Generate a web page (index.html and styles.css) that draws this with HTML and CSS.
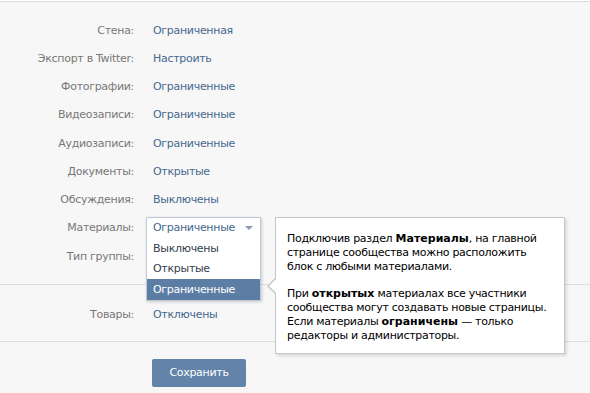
FILE: index.html
```html
<!DOCTYPE html>
<html lang="ru">
<head>
<meta charset="utf-8">
<title>Настройки</title>
<link rel="stylesheet" href="styles.css">
</head>
<body>
<div class="page">
  <div class="section first">
    <div class="row"><div class="label">Стена:</div><div class="value">Ограниченная</div></div>
    <div class="row"><div class="label">Экспорт в Twitter:</div><div class="value">Настроить</div></div>
    <div class="row"><div class="label">Фотографии:</div><div class="value">Ограниченные</div></div>
    <div class="row"><div class="label">Видеозаписи:</div><div class="value">Ограниченные</div></div>
    <div class="row"><div class="label">Аудиозаписи:</div><div class="value">Ограниченные</div></div>
    <div class="row"><div class="label">Документы:</div><div class="value">Открытые</div></div>
    <div class="row"><div class="label">Обсуждения:</div><div class="value">Выключены</div></div>
    <div class="row"><div class="label">Материалы:</div>
      <div class="value anchor">
        <div class="dropdown">
          <div class="dd-head"><span>Ограниченные</span><span class="dd-arrow"></span></div>
          <div class="dd-item">Выключены</div>
          <div class="dd-item">Открытые</div>
          <div class="dd-item selected">Ограниченные</div>
        </div>
        <div class="tip">
          <p>Подключив раздел <b>Материалы</b>, на главной странице сообщества можно расположить блок с любыми материалами.</p>
          <p>При <b>открытых</b> материалах все участники сообщества могут создавать новые страницы. Если материалы <b>ограничены</b> — только редакторы и администраторы.</p>
        </div>
      </div>
    </div>
    <div class="row"><div class="label">Тип группы:</div><div class="value"></div></div>
  </div>
  <div class="section second">
    <div class="row"><div class="label">Товары:</div><div class="value">Отключены</div></div>
  </div>
  <div class="actions">
    <button class="btn">Сохранить</button>
  </div>
</div>
</body>
</html>
```
FILE: styles.css
```css
html, body {
  margin: 0;
  padding: 0;
  background: #f7f7f7;
}
body {
  font-family: "DejaVu Sans", "Liberation Sans", sans-serif;
  font-size: 11px;
  letter-spacing: -0.3px;
  border-top: 1px solid #ffffff;
}
.page {
  border-top: 1px solid #dcdcdc;
  height: 391px;
  overflow: hidden;
}
.section {
  border-bottom: 1px solid #dedede;
}
.section.first {
  padding: 14px 0 14px;
}
.section.second {
  padding: 15px 0 12px;
}
.row {
  display: flex;
  align-items: center;
  height: 28.25px;
}
.label {
  width: 134px;
  text-align: right;
  color: #777777;
  flex: none;
}
.value {
  margin-left: 19px;
  color: #45688e;
  white-space: nowrap;
}
.anchor {
  position: relative;
  align-self: stretch;
}
.dropdown {
  position: absolute;
  left: -7px;
  top: 3px;
  width: 113px;
  background: #ffffff;
  border: 1px solid #bfc9d4;
  box-shadow: 1px 1px 3px rgba(0, 0, 0, 0.18);
  z-index: 2;
}
.dd-head, .dd-item {
  height: 20px;
  line-height: 20px;
  padding-left: 6px;
  color: #45688e;
}
.dd-head {
  display: flex;
  align-items: center;
  justify-content: space-between;
  padding-right: 7px;
  height: 21px;
}
.dd-item {
  color: #34404e;
}
.dd-arrow {
  width: 0;
  height: 0;
  border-left: 4px solid transparent;
  border-right: 4px solid transparent;
  border-top: 4px solid #8c9aab;
}
.dd-item.selected {
  background: #5c7ea5;
  color: #ffffff;
  height: 21px;
  line-height: 21px;
}
.tip {
  position: absolute;
  left: 122px;
  top: 3px;
  width: 264px;
  padding: 14px 13px 10px 11px;
  background: #ffffff;
  border: 1px solid #c3c7cc;
  box-shadow: 2px 2px 3px rgba(0, 0, 0, 0.12);
  color: #000000;
  white-space: normal;
  line-height: 14px;
  z-index: 2;
}
.tip p {
  margin: 0;
}
.tip b {
  letter-spacing: 0;
}
.tip p + p {
  margin-top: 13px;
}
.tip::before, .tip::after {
  content: "";
  position: absolute;
  width: 0;
  height: 0;
  top: 60px;
  border-top: 8px solid transparent;
  border-bottom: 8px solid transparent;
}
.tip::before {
  left: -9px;
  border-right: 8px solid #c3c7cc;
}
.tip::after {
  left: -7px;
  border-right: 8px solid #ffffff;
}
.actions {
  padding: 17px 0 0 152px;
}
.btn {
  width: 94px;
  height: 28px;
  border: 0;
  border-radius: 2px;
  background: #6383a8;
  color: #ffffff;
  font-family: inherit;
  font-size: 11px;
  letter-spacing: inherit;
  padding: 0;
}
```
